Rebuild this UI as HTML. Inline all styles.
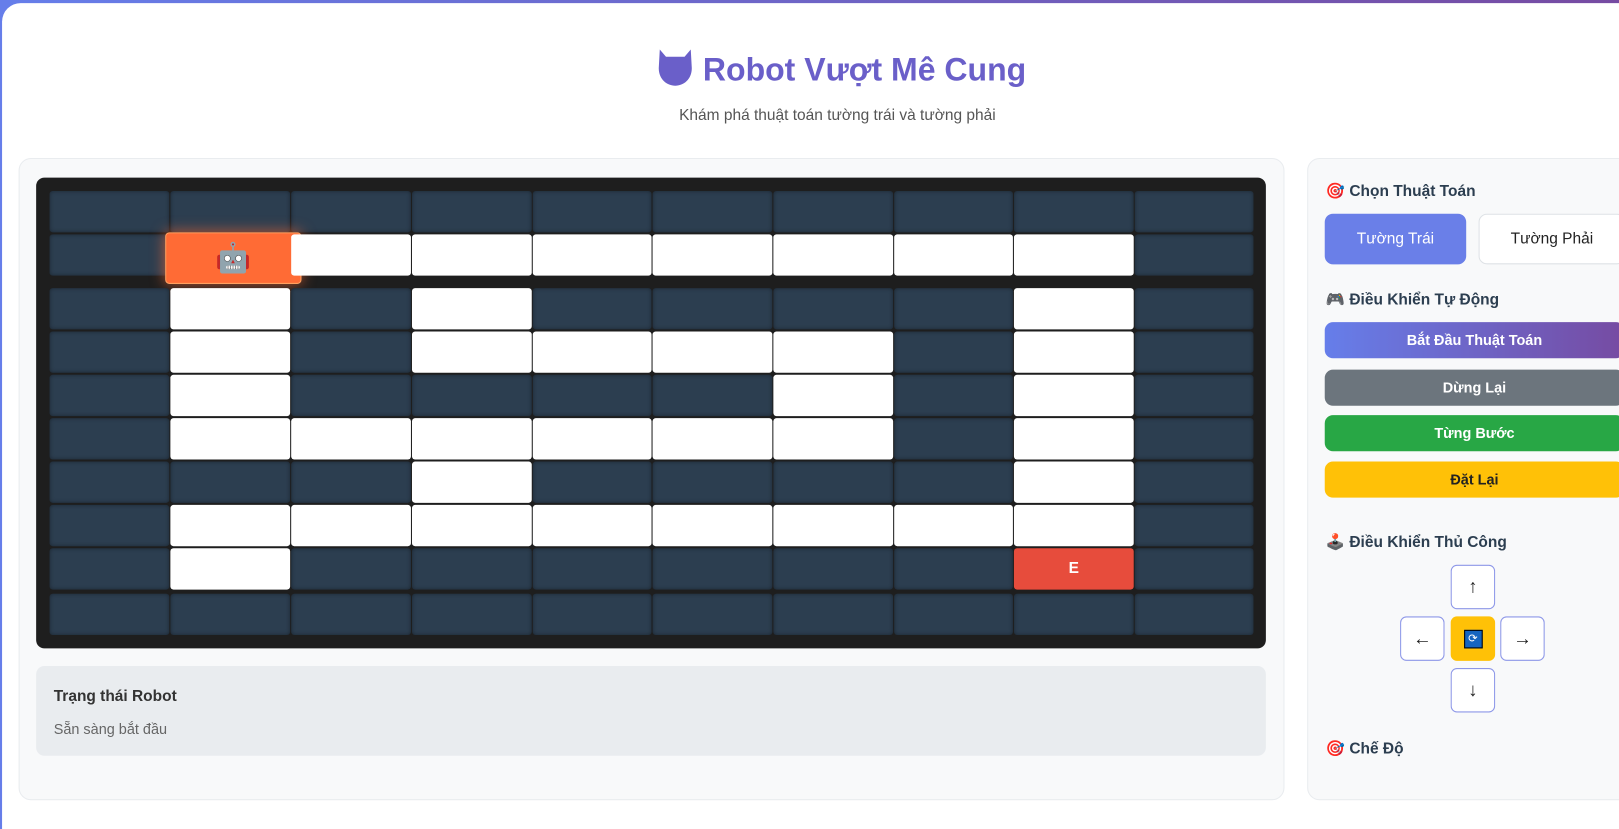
<!DOCTYPE html>
<html><head><meta charset="utf-8"><style>
html,body{margin:0;padding:0;width:1619px;height:763px;overflow:hidden;background:linear-gradient(90deg,#667eea,#764ba2);}
#w{position:absolute;left:0;top:0;width:1568px;height:739px;transform:scale(1.03253);transform-origin:0 0;font-family:"Liberation Sans","DejaVu Sans",sans-serif;}
.card{position:absolute;left:2px;top:3px;width:1600px;height:800px;background:#fff;border-radius:18px 0 0 0;}
.a{position:absolute;}
h1{position:absolute;left:0;width:1630px;top:46px;margin:0;text-align:center;font-size:31px;font-weight:bold;color:#6a5fc9;}
.sub{position:absolute;left:0;width:1622px;top:103px;text-align:center;font-size:15px;color:#555;}
.panel{position:absolute;background:#f8f9fa;border:1px solid #e9ecef;border-radius:12px;}
.maze{position:absolute;left:35px;top:172px;width:1191px;height:456px;background:#1e1e1e;border-radius:8px;}
.c{position:absolute;border-radius:3px;}
.d{background:#2c3e50;box-shadow:inset 0 0 4px rgba(0,0,0,.4);}
.wt{background:#fff;}
.h3{position:absolute;font-size:15px;font-weight:bold;color:#2c3e50;}
.btn{position:absolute;border-radius:8px;font-size:14px;font-weight:bold;text-align:center;color:#fff;}
.ar{position:absolute;width:41px;height:41px;border:1.5px solid #8d97e8;border-radius:6px;background:#fff;text-align:center;line-height:41px;font-size:18px;color:#222;}
</style></head><body><div id="w">
<div class="card"></div>
<h1><svg width="36" height="38" viewBox="0 0 36 38" style="vertical-align:-6px"><path d="M3 2 L9 9 L27 9 L33 2 L34 20 C34 31 26 37 18 37 C10 37 2 31 2 20 Z" fill="#6a5fc9"/></svg> Robot Vượt Mê Cung</h1>
<div class="sub">Khám phá thuật toán tường trái và tường phải</div>
<div class="panel" style="left:18px;top:153px;width:1224px;height:620px"></div>
<div class="panel" style="left:1266px;top:153px;width:320px;height:620px"></div>
<div class="maze"></div>
<div id="cells"></div>
<div class="a" style="left:35px;top:645px;width:1191px;height:87px;background:#e9ecef;border-radius:8px"></div>
<div class="a" style="left:52px;top:666px;font-size:15px;font-weight:bold;color:#333">Trạng thái Robot</div>
<div class="a" style="left:52px;top:698px;font-size:14px;color:#666">Sẵn sàng bắt đầu</div>

<div class="h3" style="left:1284px;top:176px">🎯 Chọn Thuật Toán</div>
<div class="btn" style="left:1283px;top:207px;width:137px;height:49px;line-height:49px;background:#6a7fe8;font-size:15px;font-weight:normal">Tường Trái</div>
<div class="btn" style="left:1432px;top:207px;width:140px;height:47px;line-height:47px;background:#fff;border:1px solid #dee2e6;color:#222;font-size:15px;font-weight:normal">Tường Phải</div>
<div class="h3" style="left:1284px;top:281px">🎮 Điều Khiển Tự Động</div>
<div class="btn" style="left:1283px;top:312px;width:290px;height:35px;line-height:35px;background:linear-gradient(90deg,#667eea,#764ba2)">Bắt Đầu Thuật Toán</div>
<div class="btn" style="left:1283px;top:358px;width:290px;height:35px;line-height:35px;background:#6c757d">Dừng Lại</div>
<div class="btn" style="left:1283px;top:402px;width:290px;height:35px;line-height:35px;background:#28a745">Từng Bước</div>
<div class="btn" style="left:1283px;top:447px;width:290px;height:35px;line-height:35px;background:#ffc107;color:#222">Đặt Lại</div>
<div class="h3" style="left:1284px;top:516px">🕹️ Điều Khiển Thủ Công</div>
<div class="ar" style="left:1405px;top:547px">↑</div>
<div class="ar" style="left:1356px;top:597px">←</div>
<div class="ar" style="left:1405px;top:597px;background:#ffc107;border-color:#ffc107"><span style="display:inline-block;width:16px;height:16px;background:#1565c0;border:1px solid #000;color:#fff;font-size:11px;line-height:16px;vertical-align:middle">⟳</span></div>
<div class="ar" style="left:1453px;top:597px">→</div>
<div class="ar" style="left:1405px;top:647px">↓</div>
<div class="h3" style="left:1284px;top:716px">🎯 Chế Độ</div>

<script>
var xs=[48,165,282,399,516,632,749,866,982,1099,1215];
var ys=[185,227,279,321,363,405,447,489,531,575],H=40;
var m=["DDDDDDDDDD","DRWWWWWWWD","DWDWDDDDWD","DWDWWWWDWD","DWDDDDWDWD","DWWWWWWDWD","DDDWDDDDWD","DWWWWWWWWD","DWDDDDDDED","DDDDDDDDDD"];
var h="";
for(var r=0;r<10;r++)for(var c=0;c<10;c++){
 var t=m[r][c],x=xs[c],y=ys[r],w=xs[c+1]-xs[c]-1;
 if(t=="D")h+='<div class="c d" style="left:'+x+'px;top:'+y+'px;width:'+w+'px;height:'+H+'px"></div>';
 else if(t=="W")h+='<div class="c wt" style="left:'+x+'px;top:'+y+'px;width:'+w+'px;height:'+H+'px"></div>';
 else if(t=="E")h+='<div class="c" style="left:'+x+'px;top:'+y+'px;width:'+w+'px;height:'+H+'px;background:#e74c3c;color:#fff;font-weight:bold;font-size:15px;text-align:center;line-height:'+H+'px">E</div>';
 else h+='<div class="c" style="left:160px;top:225px;width:132px;height:50px;background:#ff6b35;border:1px solid #ffa060;box-sizing:border-box;box-shadow:0 0 14px rgba(255,107,53,.7);text-align:center;line-height:48px;font-size:28px;border-radius:4px">🤖</div>';
}
document.getElementById("cells").innerHTML=h;
</script>
</div></body></html>
